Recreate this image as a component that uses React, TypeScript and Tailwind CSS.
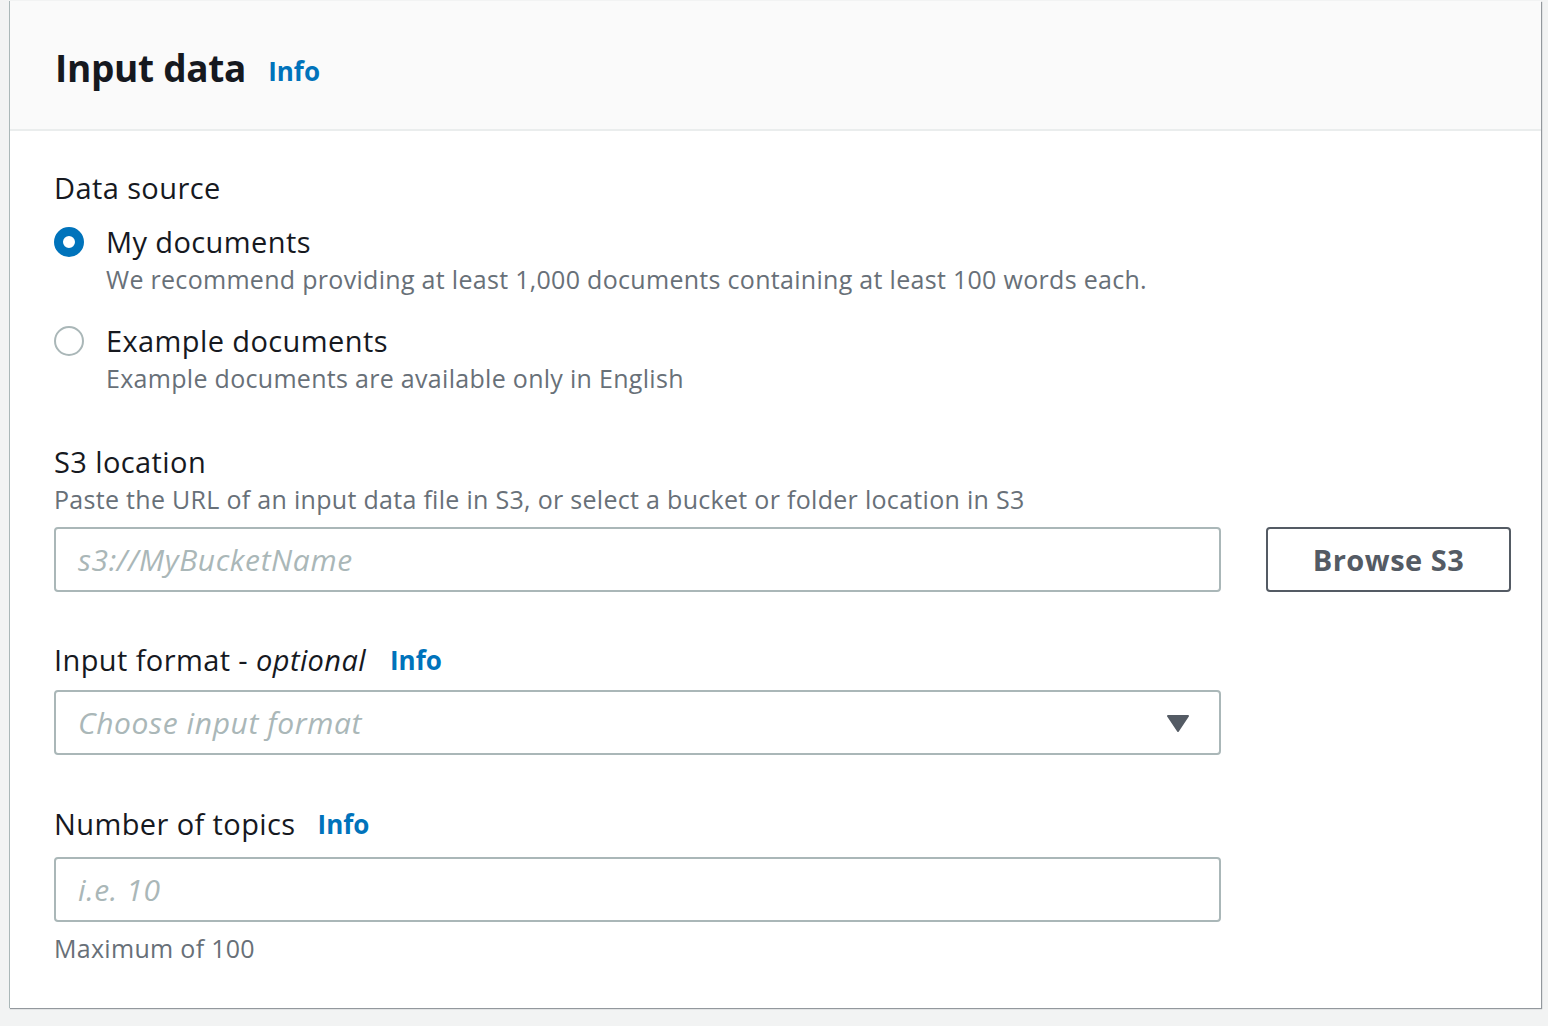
import React from "react";

const font = { fontFamily: '"Open Sans", "Noto Sans", Arial, sans-serif' };

function Info() {
  return <span className="text-[26px] font-bold text-[#0073bb] leading-none">Info</span>;
}

function Radio({ checked }: { checked: boolean }) {
  return checked ? (
    <span className="block w-[30px] h-[30px] rounded-full border-[9px] border-[#0073bb] bg-white shrink-0" />
  ) : (
    <span className="block w-[30px] h-[30px] rounded-full border-[2px] border-[#aab7b8] bg-white shrink-0" />
  );
}

const label = "text-[29px] leading-[38px] tracking-[0.4px]";
const desc = "text-[25px] leading-[37px] tracking-[0.3px] text-[#687078]";
const ph = "text-[30px] italic tracking-[0.6px] text-[#aab7b8]";

export default function App() {
  return (
    <div className="w-[1548px] h-[1026px] bg-[#f2f3f3] pt-[1px] pl-[9px] overflow-hidden" style={font}>
      <div className="w-[1532px] h-[1007px] bg-white border-l border-[#aab7b8] shadow-[1px_1px_1px_0_rgba(84,91,100,0.6)] flex flex-col">
        <div className="h-[130px] bg-[#fafafa] border-b-2 border-[#eaeded] flex items-center pl-[45px] gap-[22px] pt-[6px]">
          <span className="text-[37px] font-bold text-[#16191f] tracking-[-0.3px]">Input data</span>
          <span className="pt-[8px]"><Info /></span>
        </div>
        <div className="pl-[44px] pt-[38px] flex flex-col text-[#16191f]">
          <div className={label}>Data source</div>
          <div className="mt-[19px] flex gap-[22px]">
            <div className="pt-[1px]"><Radio checked /></div>
            <div className="flex flex-col -mt-[3px]">
              <span className={label}>My documents</span>
              <span className={desc}>We recommend providing at least 1,000 documents containing at least 100 words each.</span>
            </div>
          </div>
          <div className="mt-[27px] flex gap-[22px]">
            <div className="pt-[1px]"><Radio checked={false} /></div>
            <div className="flex flex-col -mt-[3px]">
              <span className={label}>Example documents</span>
              <span className={desc}>Example documents are available only in English</span>
            </div>
          </div>
          <div className="mt-[46px] text-[29px] leading-[38px] tracking-[0.4px]">S3 location</div>
          <div className="text-[25px] leading-[36px] tracking-[0.3px] text-[#687078]">Paste the URL of an input data file in S3, or select a bucket or folder location in S3</div>
          <div className="mt-[10px] flex items-center gap-[45px]">
            <div className="w-[1167px] h-[65px] border-2 border-[#aab7b8] rounded-[4px] flex items-center pl-[22px]">
              <span className={ph}>s3://MyBucketName</span>
            </div>
            <div className="w-[245px] h-[65px] border-2 border-[#545b64] rounded-[4px] flex items-center justify-center">
              <span className="text-[29px] font-bold tracking-[0.5px] text-[#545b64]">Browse S3</span>
            </div>
          </div>
          <div className="mt-[49px] flex items-center gap-[24px]">
            <span className={label}>Input format - <i>optional</i></span>
            <Info />
          </div>
          <div className="mt-[11px] w-[1167px] h-[65px] border-2 border-[#aab7b8] rounded-[4px] flex items-center justify-between pl-[22px] pr-[30px]">
            <span className={ph}>Choose input format</span>
            <svg width="22" height="18" viewBox="0 0 22 18">
              <path d="M1 2 L21 2 L11 17 Z" fill="#545b64" stroke="#545b64" strokeWidth="2" strokeLinejoin="round" />
            </svg>
          </div>
          <div className="mt-[50px] flex items-center gap-[22px]">
            <span className={label}>Number of topics</span>
            <Info />
          </div>
          <div className="mt-[14px] w-[1167px] h-[65px] border-2 border-[#aab7b8] rounded-[4px] flex items-center pl-[22px]">
            <span className={ph}>i.e. 10</span>
          </div>
          <div className="mt-[8px] text-[25px] leading-[36px] tracking-[0.3px] text-[#687078]">Maximum of 100</div>
        </div>
      </div>
    </div>
  );
}
